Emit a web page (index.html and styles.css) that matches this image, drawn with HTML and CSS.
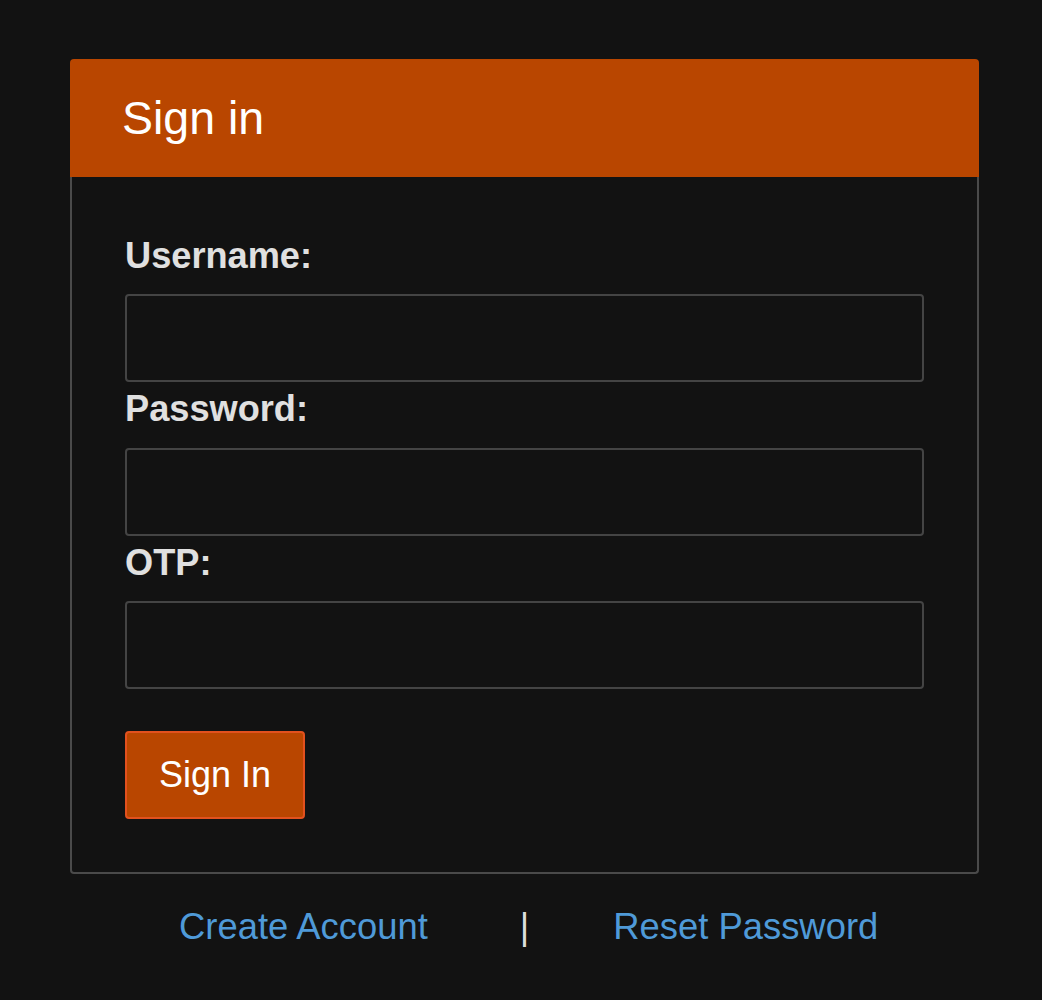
FILE: index.html
```html
<!DOCTYPE html>
<html lang="en">
<head>
<meta charset="utf-8">
<title>Sign in</title>
<link rel="stylesheet" href="styles.css">
</head>
<body>
<main class="page">
  <section class="card">
    <header class="card-header">
      <h1 class="card-title">Sign in</h1>
    </header>
    <form class="card-body">
      <label class="field-label" for="username">Username:</label>
      <input class="field-input" id="username" type="text">
      <label class="field-label" for="password">Password:</label>
      <input class="field-input" id="password" type="password">
      <label class="field-label" for="otp">OTP:</label>
      <input class="field-input" id="otp" type="text">
      <button class="submit-btn" type="button">Sign In</button>
    </form>
  </section>
  <nav class="links">
    <a class="link" href="#">Create Account</a>
    <span class="sep">|</span>
    <a class="link" href="#">Reset Password</a>
  </nav>
</main>
</body>
</html>
```

FILE: styles.css
```css
html, body {
  margin: 0;
  padding: 0;
  background: #121212;
}
body {
  font-family: "Liberation Sans", Arial, sans-serif;
  color: #e0e0e0;
}
.page {
  padding: 59px 0 0 70px;
  width: 909px;
}
.card {
  width: 909px;
}
.card-header {
  background: #b94600;
  border-radius: 4px 4px 0 0;
  padding: 32px 52px;
}
.card-title {
  margin: 0;
  font-size: 46.5px;
  line-height: 54px;
  font-weight: normal;
  color: #ffffff;
}
.card-body {
  display: flex;
  flex-direction: column;
  align-items: flex-start;
  border: 2px solid #4a4a4a;
  border-top: none;
  border-radius: 0 0 4px 4px;
  padding: 51.5px 53px 53px 53px;
}
.field-label {
  display: block;
  font-size: 36.2px;
  font-weight: bold;
  line-height: 41px;
  margin: 6px 0 18.5px;
  color: #e0e0e0;
}
.field-input {
  box-sizing: border-box;
  width: 799px;
  height: 88px;
  margin: 0;
  background: #121212;
  border: 2px solid #444444;
  border-radius: 4px;
  color: #e0e0e0;
  font-size: 36px;
  font-family: inherit;
  padding: 0 16px;
}
.submit-btn {
  margin-top: 42px;
  box-sizing: border-box;
  height: 88px;
  padding: 0 32px;
  background: #b94600;
  border: 2px solid #e2511e;
  border-radius: 4px;
  color: #ffffff;
  font-family: inherit;
  font-size: 36px;
  line-height: 40px;
}
.links {
  display: flex;
  align-items: baseline;
  padding: 32px 0 0 109px;
  font-size: 36.4px;
  line-height: 41px;
}
.link {
  color: #4f9ad8;
  text-decoration: none;
}
.sep {
  color: #dddddd;
  margin: 0 84px 0 92px;
}
```
